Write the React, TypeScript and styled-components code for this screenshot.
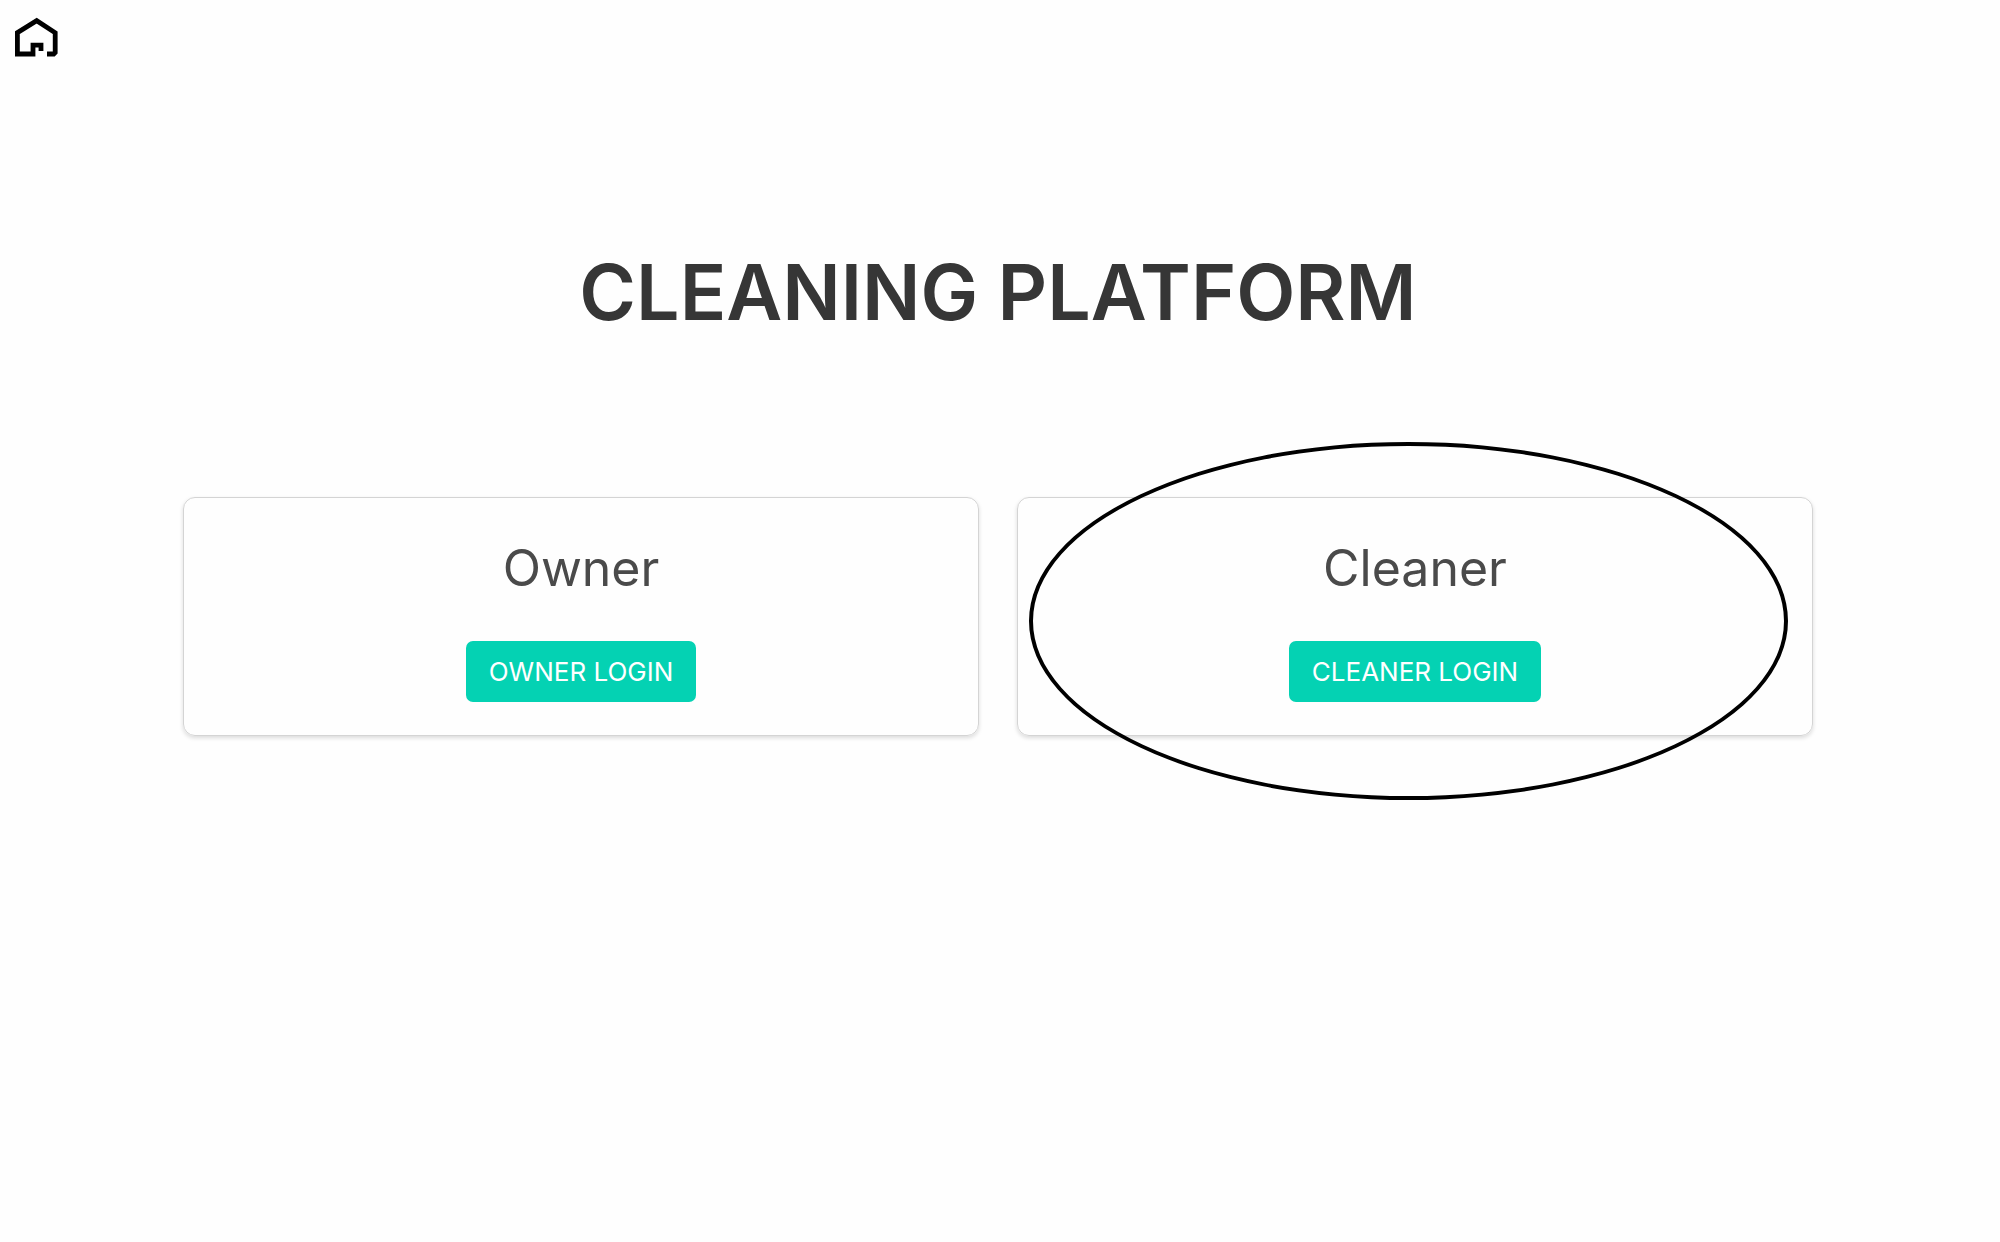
import React from "react";
import styled, { createGlobalStyle } from "styled-components";

const GlobalStyle = createGlobalStyle`
  *, *::before, *::after { box-sizing: border-box; }
  body {
    margin: 0;
    background: #fefefe;
    color: #4a4a4a;
    font-family: Inter, "Liberation Sans", sans-serif;
  }
`;

const Page = styled.div`
  display: flex;
  flex-direction: column;
  min-height: 100vh;
`;

const TopBar = styled.header`
  display: flex;
  padding: 12px;
`;

const HomeLink = styled.a`
  display: flex;
  color: #000;
`;

const Main = styled.main`
  display: flex;
  flex-direction: column;
  gap: 160px;
  padding: 175px 187px 0 183px;
`;

const Title = styled.h1`
  margin: 0;
  color: #363636;
  font-size: 77px;
  font-weight: 600;
  line-height: 90px;
  text-align: center;
`;

const Cards = styled.div`
  display: grid;
  grid-template-columns: repeat(auto-fit, minmax(400px, 1fr));
  gap: 38px;
`;

const Card = styled.section`
  position: relative;
  display: flex;
  flex-direction: column;
  align-items: center;
  gap: 40px;
  padding: 37px 24px 33px;
  border: 1px solid #d4d4d4;
  border-radius: 12px;
  box-shadow: 0 2px 4px rgba(0, 0, 0, 0.14);
`;

const Role = styled.h2`
  margin: 0;
  font-size: 50px;
  font-weight: 400;
  line-height: 66px;
`;

const LoginButton = styled.button`
  padding: 0 23px;
  border: 0;
  border-radius: 7px;
  background: #04d2b3;
  color: #fff;
  font-family: inherit;
  font-size: 26px;
  line-height: 61px;
  text-transform: uppercase;
  cursor: pointer;
`;

const Highlight = styled.div`
  position: absolute;
  inset: -56px 24px -65px 11px;
  border: 4px solid #000;
  border-radius: 50%;
  pointer-events: none;
`;

function HomeIcon() {
  return (
    <svg width="48" height="48" viewBox="0 0 48 48" fill="none" stroke="currentColor" strokeWidth="4.8" aria-hidden="true">
      <path d="M29 39V33.2H21V42H5.4V20.7L24.7 8.7L43.2 20.7V40.5L41.7 42H35" />
    </svg>
  );
}

type RoleCardProps = { role: string; highlighted?: boolean };

function RoleCard({ role, highlighted = false }: RoleCardProps) {
  return (
    <Card>
      <Role>{role}</Role>
      <LoginButton type="button">{role} login</LoginButton>
      {highlighted && <Highlight />}
    </Card>
  );
}

export default function App() {
  return (
    <Page>
      <GlobalStyle />
      <TopBar>
        <HomeLink href="#" aria-label="Home">
          <HomeIcon />
        </HomeLink>
      </TopBar>
      <Main>
        <Title>CLEANING PLATFORM</Title>
        <Cards>
          <RoleCard role="Owner" />
          <RoleCard role="Cleaner" highlighted />
        </Cards>
      </Main>
    </Page>
  );
}
